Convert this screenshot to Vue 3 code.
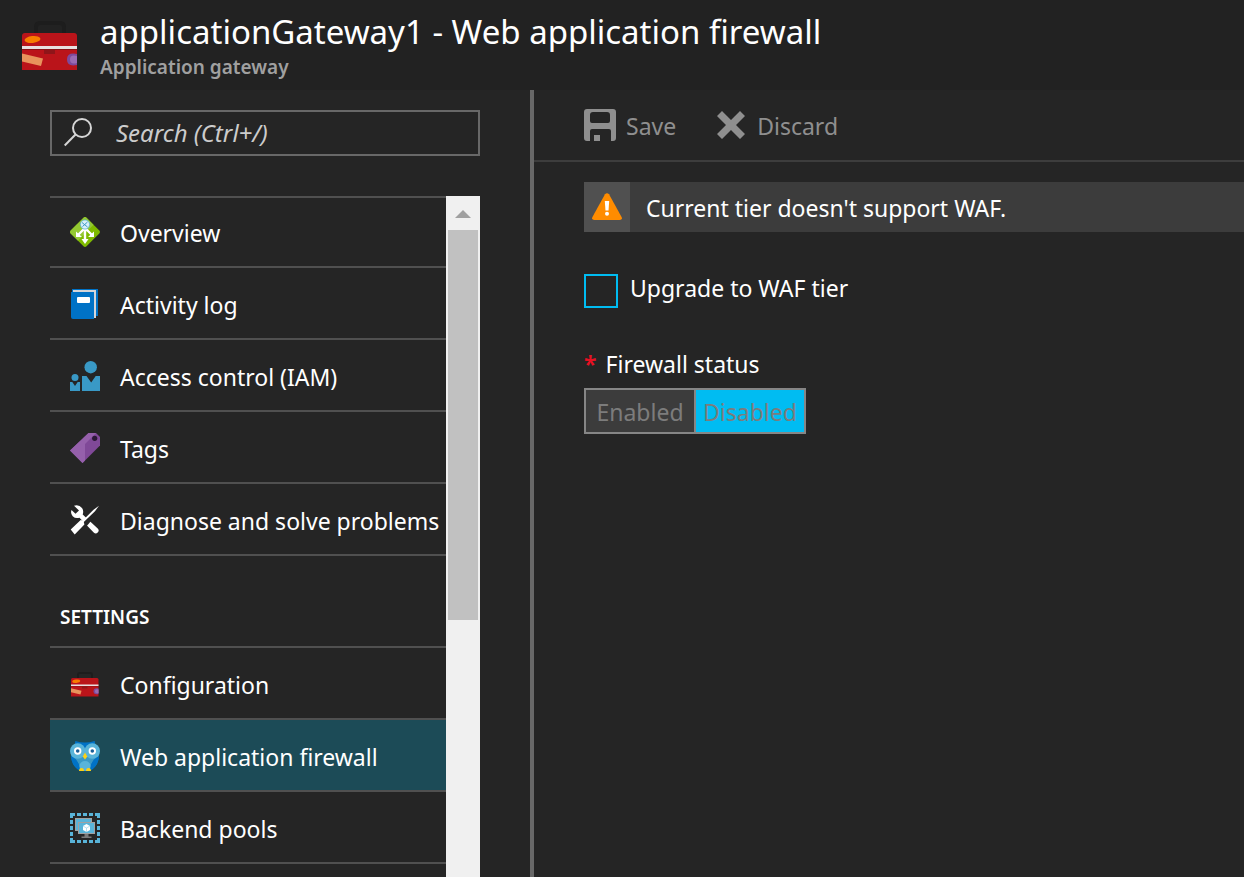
<script setup>
import { ref } from 'vue'

const query = ref('')
const upgrade = ref(false)
const status = ref('Disabled')
const active = ref('Web application firewall')

const general = [
  { label: 'Overview', icon: 'gateway' },
  { label: 'Activity log', icon: 'log' },
  { label: 'Access control (IAM)', icon: 'people' },
  { label: 'Tags', icon: 'tag' },
  { label: 'Diagnose and solve problems', icon: 'tools' },
]
const settings = [
  { label: 'Configuration', icon: 'case' },
  { label: 'Web application firewall', icon: 'owl' },
  { label: 'Backend pools', icon: 'pool' },
]
const groups = [
  { title: '', items: general },
  { title: 'SETTINGS', items: settings },
]
</script>

<template>
  <div class="blade">
    <svg class="defs" aria-hidden="true">
      <symbol id="i-case" viewBox="0 0 56 50">
        <path d="M14 14V7q0-4 4-4h20q4 0 4 4v7" fill="none" stroke="#1d1d1d" stroke-width="4" />
        <path d="M0 16q0-3 3-3h49q3 0 3 3v34H0z" fill="#ba141a" />
        <ellipse cx="10.500" cy="19.500" rx="8" ry="3.500" transform="rotate(-6 10.500 19.500)" fill="#f77d00" />
        <path d="M0 26h55v3H0z" fill="#e8dfe0" />
        <path d="M0 29h55v1H0z" fill="#8a1216" />
        <path d="M22 30h11v4H22z" fill="#8f1519" />
        <path d="M0 33.500l21 5-2 7.500-19-4.500z" fill="#e8935c" />
        <path d="M55 34q-10-2-10 5.500T55 45z" fill="#7d4a9c" />
        <path d="M55 36q-7-2-7 3.500T55 43z" fill="#9a6bb2" />
      </symbol>
      <symbol id="i-gateway" viewBox="0 0 30 30">
        <path d="M13.500.7q1.500-1.300 3 0l12.800 12.800q1.300 1.500 0 3L16.500 29.300q-1.500 1.300-3 0L.7 16.500q-1.300-1.500 0-3z" fill="#7fba00" />
        <path d="M13.500.7q1.500-1.300 3 0l7 7L8 23.800.7 16.500q-1.300-1.500 0-3z" fill="#94c832" />
        <path d="M15 11v13M14 12l-6 6M16 12l6 6" stroke="#fff" stroke-width="2.400" fill="none" />
        <path d="M11.500 22h7L15 27zM6 14.500V20h6zM24 14.500V20h-6z" fill="#fff" />
        <circle cx="15" cy="7.500" r="4.600" fill="#d9eff8" stroke="#59b4d9" stroke-width=".8" />
        <path d="M12 5.500l5.500 4.500M12.500 9.500l5-4.500" stroke="#3999c6" stroke-width="1" fill="none" />
      </symbol>
      <symbol id="i-log" viewBox="0 0 30 30">
        <path d="M2 0h26v27H2z" fill="#0072c6" />
        <path d="M3 1h23v28H3z" fill="#d5d5d8" />
        <path d="M1 3h23v27H3q-2 0-2-2z" fill="#0072c6" />
        <rect x="7" y="8" width="13" height="6" rx="1" fill="#fff" />
      </symbol>
      <symbol id="i-people" viewBox="0 0 30 30">
        <g fill="#3999c6">
          <circle cx="20.700" cy="6.200" r="6.200" />
          <path d="M12 15h4.500l4.700 6.500 4.500-6.500H30v15H12z" />
          <circle cx="5" cy="16.500" r="3.500" />
          <path d="M0 21h2.300L5 25l2.700-4H10v9H0z" />
        </g>
      </symbol>
      <symbol id="i-tag" viewBox="0 0 30 30">
        <path d="M18.500 0H26l4 4v8.500L12.500 30 0 17.500z" fill="#804998" />
        <path d="M18.500 0H26L15 11v16.500L12.500 30 0 17.500z" fill="#9560ab" />
        <circle cx="24.700" cy="5.300" r="2.600" fill="#2b1836" />
      </symbol>
      <symbol id="i-tools" viewBox="0 0 30 30">
        <path d="M4 .7Q9-.8 12 3q2 3 .7 6.500L27.700 23.500q2 2 0 4t-4 0L9.500 12.700Q5.500 14 2.700 11.200.2 8.500 1.500 5l4 3.700L9 5.500z" fill="#fff" />
        <path d="M11 23L28.500 3" stroke="#252525" stroke-width="6" />
        <path d="M29 .7l-5.500 4L12.700 15.500l-2-.6-10 9.600 4 5 9.700-10-.6-2.500L25 6.200z" fill="#fff" />
      </symbol>
      <symbol id="i-owl" viewBox="0 0 30 30">
        <path d="M5 3Q5 0 5.500 0 10 1.500 15 1.500T24.500 0Q25 0 25 3l4 10q0 12-9 17H10Q1 25 1 13z" fill="#0072c6" />
        <path d="M1 13q10 3 14 2 4 1 14-2 0 5-6 8-3 2-3 9H10q0-7-3-9-6-3-6-8z" fill="#3999c6" />
        <path d="M1 15q9 4 8 14Q1 24 1 15zM29 15q-9 4-8 14 8-5 8-14z" fill="#0072c6" />
        <ellipse cx="15" cy="25" rx="5.500" ry="5" fill="#59b4d9" />
        <circle cx="7.700" cy="10" r="7.700" fill="#59b4d9" />
        <circle cx="22.300" cy="10" r="7.700" fill="#59b4d9" />
        <circle cx="7.700" cy="10" r="3.700" fill="#fff" />
        <circle cx="22.300" cy="10" r="3.700" fill="#fff" />
        <circle cx="7.700" cy="10" r="1.800" fill="#1b5f97" />
        <circle cx="22.300" cy="10" r="1.800" fill="#1b5f97" />
        <path d="M15 11.500l2.300 4L15 18.500l-2.300-3z" fill="#fcd116" />
        <path d="M9 30q0-3 2.500-3t2.500 3zM16 30q0-3 2.500-3t2.500 3z" fill="#fcd116" />
      </symbol>
      <symbol id="i-pool" viewBox="0 0 30 30">
        <g fill="none" stroke="#59b4d9" stroke-width="3">
          <path d="M1.500 5V1.500H5M25 1.500h3.500V5M28.500 25v3.500H25M5 28.500H1.500V25" />
          <path d="M7 1.500h16M7 28.500h16M1.500 7v16M28.500 7v16" stroke-dasharray="4 2" />
        </g>
        <path d="M5 5h17v4H8v9H5z" fill="#a0a1a2" />
        <path d="M6 6h15v3H8v8H6z" fill="#59b4d9" />
        <path d="M8 9h17v12H8z" fill="#a0a1a2" />
        <path d="M9 10h15v10H9z" fill="#59b4d9" />
        <path d="M14.500 21h4v2.500h3V25h-10v-1.500h3z" fill="#7a7a7a" />
        <path d="M16.500 11l3.500 2v4l-3.500 2-3.500-2v-4z" fill="#fff" />
        <path d="M13 13l3.500 2 3.500-2M16.500 15v4" fill="none" stroke="#8fcde6" stroke-width=".6" />
      </symbol>
    </svg>

    <header class="head">
      <svg class="head-icon" aria-hidden="true"><use href="#i-case" /></svg>
      <div>
        <h1>applicationGateway1 - Web application firewall</h1>
        <p>Application gateway</p>
      </div>
    </header>

    <div class="body">
      <aside class="side">
        <label class="search">
          <svg viewBox="0 0 30 30" aria-hidden="true">
            <circle cx="18" cy="10" r="9" />
            <path d="M11.500 16.500L.7 27.500" />
          </svg>
          <input v-model="query" type="text" placeholder="Search (Ctrl+/)" aria-label="Search (Ctrl+/)" />
        </label>

        <div class="menu">
          <nav>
            <template v-for="g in groups" :key="g.title">
              <h2 v-if="g.title">{{ g.title }}</h2>
              <ul>
                <li v-for="item in g.items" :key="item.label" :class="{ active: item.label === active }">
                  <a href="#" @click.prevent="active = item.label">
                    <svg :class="item.icon" aria-hidden="true"><use :href="'#i-' + item.icon" /></svg>
                    <span>{{ item.label }}</span>
                  </a>
                </li>
              </ul>
            </template>
          </nav>
          <div class="track" aria-hidden="true">
            <div class="arrow"><svg viewBox="0 0 16 8"><path d="M0 8L8 0l8 8z" /></svg></div>
            <div class="thumb"></div>
          </div>
        </div>
      </aside>

      <main>
        <div class="toolbar">
          <button type="button" disabled>
            <svg viewBox="0 0 32 32" aria-hidden="true">
              <path fill-rule="evenodd" d="M3 0h26q3 0 3 3v26q0 3-3 3h-2V22q0-2-2-2H8q-2 0-2 2v10H3q-3 0-3-3V3q0-3 3-3zM9 3Q6 3 6 6v6q0 2 2 2h16q2 0 2-2V6q0-3-3-3zM10 26h6v6h-6z" />
            </svg>
            <span>Save</span>
          </button>
          <button type="button" disabled>
            <svg viewBox="0 0 32 32" aria-hidden="true">
              <path d="M7 2l9 9 9-9 5 5-9 9 9 9-5 5-9-9-9 9-5-5 9-9-9-9z" />
            </svg>
            <span>Discard</span>
          </button>
        </div>

        <div class="alert" role="status">
          <div class="alert-icon">
            <svg viewBox="0 0 30 27" aria-hidden="true">
              <path d="M13 1.200q2-2 4 0l12.700 23q.8 2.800-2 2.800H2.300q-2.800 0-2-2.800z" fill="#ff8c00" />
              <path d="M12.800 8h4.400l-.7 9.500h-3z" fill="#fff" />
              <circle cx="15" cy="20.800" r="2" fill="#fff" />
            </svg>
          </div>
          <p>Current tier doesn't support WAF.</p>
        </div>

        <label class="check">
          <input v-model="upgrade" type="checkbox" />
          <span>Upgrade to WAF tier</span>
        </label>

        <fieldset>
          <legend><span class="star">*</span>Firewall status</legend>
          <div class="toggle">
            <label v-for="s in ['Enabled', 'Disabled']" :key="s" :class="{ on: s === status }">
              <input v-model="status" type="radio" name="status" :value="s" disabled />{{ s }}
            </label>
          </div>
        </fieldset>
      </main>
    </div>
  </div>
</template>

<style>
body { background: #252525; }
</style>

<style scoped>
* { box-sizing: border-box; }
.blade {
  display: flex;
  flex-direction: column;
  height: 100vh;
  overflow: hidden;
  background: #252525;
  color: #fff;
  font: 23px/32px "Noto Sans", "Open Sans", sans-serif;
}
.defs { position: absolute; width: 0; height: 0; }
h1, h2, p, ul { margin: 0; padding: 0; }
.head {
  display: flex;
  flex: none;
  gap: 22px;
  height: 90px;
  padding: 10px 22px 0;
  background: #222;
}
.head-icon { flex: none; width: 56px; height: 50px; margin-top: 10px; }
h1 { font: 400 33px/44px "Noto Sans", sans-serif; white-space: nowrap; }
.head p { color: #a0a0a0; font-size: 19px; line-height: 26px; font-weight: 600; }
.body { display: flex; flex: 1; min-height: 0; }
.side {
  display: flex;
  flex: none;
  flex-direction: column;
  gap: 40px;
  width: 534px;
  padding: 20px 50px 0;
  border-right: 4px solid #686868;
}
.search {
  display: flex;
  flex: none;
  align-items: center;
  gap: 22px;
  height: 46px;
  padding: 0 12px;
  border: 2px solid #686868;
}
.search svg { flex: none; width: 30px; height: 30px; fill: none; stroke: #d6d6d6; stroke-width: 2; }
input[type="text"] {
  flex: 1;
  min-width: 0;
  padding: 0;
  border: 0;
  outline: 0;
  background: none;
  color: #fff;
  font: italic 24px/32px "Noto Sans", sans-serif;
}
input::placeholder { color: #ccc; opacity: 1; }
.menu { display: flex; flex: 1; min-height: 0; }
nav { flex: 1; min-width: 0; overflow: hidden; border-top: 2px solid #505050; }
ul { list-style: none; }
li { padding-top: 2px; border-bottom: 2px solid #505050; }
ul:first-child li:first-child { padding-top: 0; }
li.active { background: #1c4b57; }
li a {
  display: flex;
  align-items: center;
  gap: 20px;
  height: 68px;
  padding-left: 20px;
  color: #fff;
  text-decoration: none;
  white-space: nowrap;
}
li span, button span { padding-top: 2px; }
li svg { flex: none; width: 30px; height: 30px; }
li svg.case { padding: 0 1px; }
h2 {
  padding: 46px 10px 14px;
  border-bottom: 2px solid #505050;
  font-size: 19px;
  line-height: 30px;
  font-weight: 600;
}
.track { flex: none; width: 34px; padding: 0 2px; background: #f0f0f0; }
.arrow { display: grid; height: 34px; padding-top: 2px; place-items: center; }
.arrow svg { width: 16px; height: 8px; fill: #a0a0a0; }
.thumb { height: 390px; background: #c1c1c1; }
main { flex: 1; min-width: 0; }
.toolbar {
  display: flex;
  gap: 39px;
  height: 72px;
  padding: 0 50px;
  border-bottom: 2px solid #3d3d3d;
}
button {
  display: flex;
  align-items: center;
  gap: 10px;
  padding: 0;
  border: 0;
  background: none;
  color: #8f8f8f;
  font: inherit;
}
button svg { width: 32px; height: 32px; fill: #8f8f8f; }
.alert { display: flex; margin: 20px 0 0 50px; background: #3c3c3c; }
.alert-icon { display: grid; flex: none; width: 46px; height: 50px; padding-bottom: 2px; place-items: center; background: #505050; }
.alert-icon svg { width: 30px; height: 27px; }
.alert p { padding: 10px 16px 8px; }
.check { display: flex; gap: 12px; width: max-content; margin: 42px 0 0 50px; }
.check input {
  width: 34px;
  height: 34px;
  margin: 0;
  border: 2px solid #00bcf2;
  appearance: none;
}
.check input:checked { background: #00bcf2; }
.check span { line-height: 28px; }
fieldset { margin: 40px 0 0 50px; padding: 0; border: 0; }
legend { display: flex; gap: 9px; padding: 0; }
.star { color: #e81123; font-weight: 600; }
.toggle { display: flex; width: max-content; margin-top: 8px; border: 2px solid #868686; }
.toggle label {
  width: 108px;
  height: 42px;
  background: #3c3c3c;
  color: #7c7c7c;
  line-height: 44px;
  text-align: center;
}
.toggle label + label { width: 110px; border-left: 2px solid #868686; }
.toggle .on { background: #00bcf2; }
.toggle input { position: absolute; opacity: 0; }
</style>
